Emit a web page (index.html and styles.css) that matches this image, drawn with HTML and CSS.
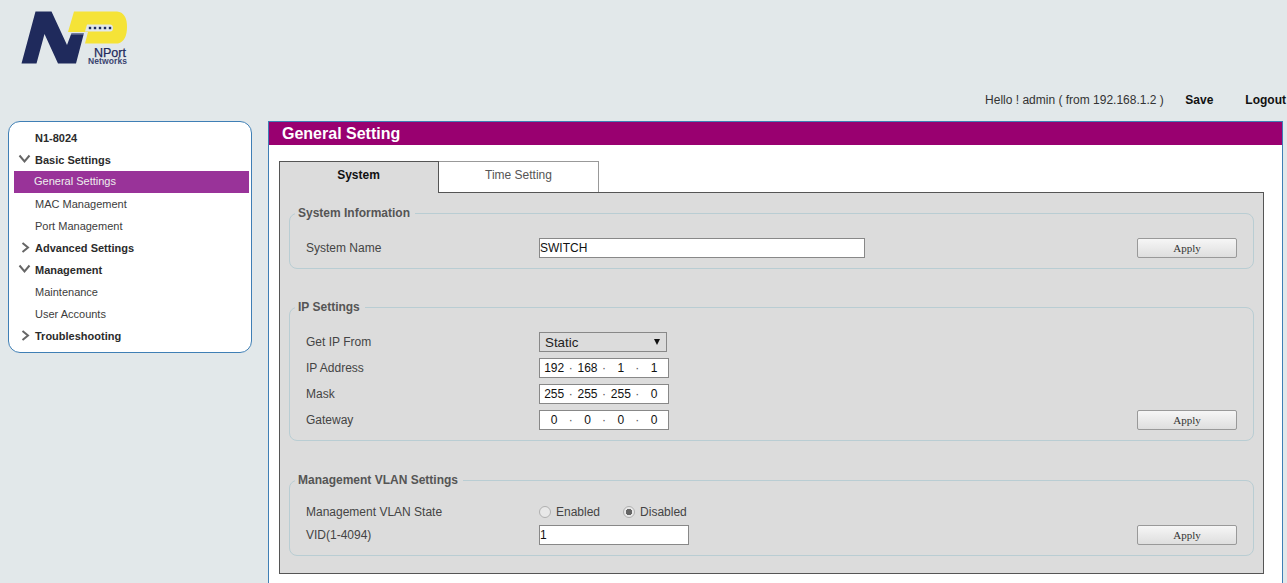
FILE: index.html
```html
<!DOCTYPE html>
<html lang="en">
<head>
<meta charset="utf-8">
<title>General Setting</title>
<link rel="stylesheet" href="styles.css">
</head>
<body>
<header class="header">
  <svg class="logo" width="110" height="56" viewBox="21 10 110 56" xmlns="http://www.w3.org/2000/svg">
    <path fill="#f5e337" d="M74 11.500H117Q127 12.500 127 27Q127 41 118 43.500H85L88 32H68Z"/>
    <path fill="#e2e8ea" d="M87 24.500H110Q113 24.500 113 28Q113 31.500 110 31.500H85Z"/>
    <g fill="#1f2a5c">
      <rect x="88.800" y="26.800" width="2.400" height="2.400"/><rect x="93.800" y="26.800" width="2.400" height="2.400"/><rect x="98.800" y="26.800" width="2.400" height="2.400"/><rect x="103.800" y="26.800" width="2.400" height="2.400"/><rect x="108.800" y="26.800" width="2.400" height="2.400"/>
      <path d="M21.500 63.500L35.500 11.500H51.500L67 45L71.500 33H84L76 63.500H58L44.500 34L36.500 63.500Z"/>
    </g>
    <rect x="71" y="33.500" width="13" height="0.800" fill="#c9d0dc"/>
    <text class="logo-big" x="94" y="57">NPort</text>
    <text class="logo-small" x="88" y="63.500">Networks</text>
  </svg>
  <div class="userbar">
    <span class="hello">Hello ! admin ( from 192.168.1.2 )</span>
    <a class="action action-save">Save</a>
    <a class="action">Logout</a>
  </div>
</header>
<div class="layout">
  <nav class="sidebar">
    <div class="item item-bold">N1-8024</div>
    <div class="item item-bold"><svg class="chev" width="14" height="10" viewBox="0 0 14 10"><path d="M1.500 1.500L6.500 7.500L11.500 1.500"/></svg>Basic Settings</div>
    <div class="item item-active">General Settings</div>
    <div class="item">MAC Management</div>
    <div class="item">Port Management</div>
    <div class="item item-bold"><svg class="chev" width="14" height="12" viewBox="0 0 14 12"><path d="M4.500 1L10 5.500L4.500 10"/></svg>Advanced Settings</div>
    <div class="item item-bold"><svg class="chev" width="14" height="10" viewBox="0 0 14 10"><path d="M1.500 1.500L6.500 7.500L11.500 1.500"/></svg>Management</div>
    <div class="item">Maintenance</div>
    <div class="item">User Accounts</div>
    <div class="item item-bold"><svg class="chev" width="14" height="12" viewBox="0 0 14 12"><path d="M4.500 1L10 5.500L4.500 10"/></svg>Troubleshooting</div>
  </nav>
  <main class="main">
    <h1 class="title">General Setting</h1>
    <div class="tabs">
      <div class="tab tab-active">System</div>
      <div class="tab">Time Setting</div>
    </div>
    <section class="panel">
      <fieldset class="group">
        <legend>System Information</legend>
        <div class="row">
          <label class="label">System Name</label>
          <input class="text text-name" type="text" value="SWITCH">
          <button class="apply" type="button">Apply</button>
        </div>
      </fieldset>
      <fieldset class="group group-ip">
        <legend>IP Settings</legend>
        <div class="row">
          <label class="label">Get IP From</label>
          <div class="select-wrap"><select class="select"><option>Static</option></select></div>
        </div>
        <div class="row">
          <label class="label">IP Address</label>
          <div class="ip"><input value="192"><i>·</i><input value="168"><i>·</i><input value="1"><i>·</i><input value="1"></div>
        </div>
        <div class="row">
          <label class="label">Mask</label>
          <div class="ip"><input value="255"><i>·</i><input value="255"><i>·</i><input value="255"><i>·</i><input value="0"></div>
        </div>
        <div class="row">
          <label class="label">Gateway</label>
          <div class="ip"><input value="0"><i>·</i><input value="0"><i>·</i><input value="0"><i>·</i><input value="0"></div>
          <button class="apply" type="button">Apply</button>
        </div>
      </fieldset>
      <fieldset class="group group-vlan">
        <legend>Management VLAN Settings</legend>
        <div class="row row-radio">
          <label class="label">Management VLAN State</label>
          <label class="radio"><input type="radio" name="vlan">Enabled</label>
          <label class="radio"><input type="radio" name="vlan" checked>Disabled</label>
        </div>
        <div class="row">
          <label class="label">VID(1-4094)</label>
          <input class="text text-vid" type="text" value="1">
          <button class="apply" type="button">Apply</button>
        </div>
      </fieldset>
    </section>
  </main>
</div>
</body>
</html>
```

FILE: styles.css
```css
* { box-sizing: border-box; }
html { overflow: hidden; }
body {
  margin: 0;
  height: 583px;
  overflow: hidden;
  background: #e2e8ea;
  color: #333;
  font: 12px/1.2 "Liberation Sans", Arial, sans-serif;
}
.header { height: 121px; position: relative; padding: 10px 0 0 21px; }
.logo { display: block; }
.logo-big { font: 12.500px "Liberation Sans", sans-serif; fill: #1f2a5c; stroke: #1f2a5c; stroke-width: 0.250px; }
.logo-small { font: bold 8.500px "Liberation Sans", sans-serif; letter-spacing: 0.100px; fill: #3a4470; }
.userbar {
  display: flex;
  justify-content: flex-end;
  align-items: center;
  height: 14px;
  margin-top: 27px;
  white-space: nowrap;
}
.hello { color: #333; }
.action { font-weight: bold; color: #111; margin-left: 32px; margin-right: 1px; }
.action-save { margin-left: 21.500px; margin-right: 0; }
.layout { display: flex; align-items: flex-start; padding-left: 8px; }
.sidebar {
  width: 244px;
  height: 232px;
  padding: 5px 2px 0 5px;
  background: #fff;
  border: 1px solid #3f7fb5;
  border-radius: 12px;
  flex: none;
}
.item {
  height: 22px;
  line-height: 22px;
  padding-left: 21px;
  font-size: 11px;
  color: #3c3c3c;
  position: relative;
  white-space: nowrap;
}
.item-bold { font-weight: bold; color: #2b2b2b; }
.item-active {
  background: #993399;
  color: #eee;
  padding-left: 20px;
  line-height: 21px;
}
.chev {
  position: absolute;
  left: 4px;
  top: 5px;
  fill: none;
  stroke: #666;
  stroke-width: 2;
}
.main {
  width: 1015px;
  margin-left: 16px;
  height: 480px;
  background: #fff;
  border: 1px solid #3f7fb5;
  border-bottom: 0;
  flex: none;
}
.title {
  margin: 0;
  height: 23px;
  padding-left: 13px;
  background: #990070;
  color: #fff;
  font-size: 16px;
  line-height: 23px;
  font-weight: bold;
}
.tabs { display: flex; align-items: flex-start; margin: 16px 0 0 10px; position: relative; z-index: 1; }
.tab {
  width: 160px;
  height: 31px;
  line-height: 27px;
  text-align: center;
  color: #555;
  background: #fff;
  border: 1px solid #999;
  border-left: 0;
  border-bottom: 0;
}
.tab-active {
  height: 32px;
  padding-right: 1px;
  color: #111;
  font-weight: bold;
  background: #dcdcdc;
  border: 1px solid #555;
  border-bottom: 0;
}
.panel {
  width: 985px;
  height: 382px;
  margin: -1px 0 0 10px;
  padding: 13px 9px 0;
  background: #dcdcdc;
  border: 1px solid #555;
}
.group {
  margin: 0;
  height: 63px;
  padding: 18px 16px 0 16px;
  border: 1px solid #b9cdd3;
  border-radius: 8px;
  min-width: 0;
}
.group legend {
  padding: 0 5px 0 3px;
  margin-left: -11px;
  color: #555;
  font-weight: bold;
  font-size: 12px;
  line-height: 14px;
}
.group-ip { height: 141px; margin-top: 31px; padding-top: 18px; }
.group-vlan { height: 83px; margin-top: 32px; padding-top: 15px; }
.row { display: flex; align-items: center; height: 20px; margin-bottom: 6px; }
.row-radio { margin-bottom: 3px; }
.label { width: 233px; color: #444; flex: none; }
.text {
  height: 20px;
  padding: 0;
  border: 1px solid #888;
  border-radius: 0;
  background: #fff;
  color: #111;
  font: 12px "Liberation Sans", sans-serif;
  outline: 0;
}
.text-name { width: 326px; }
.text-vid { width: 150px; }
.apply {
  width: 100px;
  height: 20px;
  margin-left: auto;
  padding: 0;
  border: 1px solid #999;
  border-radius: 2px;
  background: linear-gradient(#f6f6f6, #dedede);
  color: #333;
  font: 11px "Liberation Serif", serif;
}
.select-wrap { position: relative; width: 128px; }
.select-wrap::after {
  content: "";
  position: absolute;
  right: 7px;
  top: 7px;
  border: 3px solid transparent;
  border-top: 6px solid #111;
  border-bottom: 0;
  pointer-events: none;
}
.select {
  display: block;
  width: 100%;
  height: 20px;
  padding: 0 0 0 5px;
  appearance: none;
  border: 1px solid #888;
  border-radius: 0;
  background: #dcdcdc;
  color: #222;
  font: 13.333px "Liberation Sans", sans-serif;
}
.ip {
  display: flex;
  align-items: center;
  width: 130px;
  height: 20px;
  padding-left: 0;
  border: 1px solid #888;
  background: #fff;
}
.ip input {
  width: 30px;
  height: 18px;
  margin-left: -0.330px;
  padding: 0 1px 0 0;
  border: 0;
  outline: 0;
  background: transparent;
  color: #111;
  text-align: center;
  font: 12px "Liberation Sans", sans-serif;
}
.ip i {
  width: 3.660px;
  margin: 0 1px 0 -1px;
  text-align: center;
  font-style: normal;
  color: #555;
  font-size: 12px;
}
.radio { display: flex; align-items: center; margin-right: 23px; color: #444; }
.radio input {
  appearance: none;
  width: 12px;
  height: 12px;
  margin: 0 5px 0 0;
  border: 1px solid #b0b0b0;
  border-radius: 50%;
  background: #e8e8e8;
}
.radio input:checked { background: radial-gradient(circle, #666 0 3px, #e8e8e8 3.500px); }
```
